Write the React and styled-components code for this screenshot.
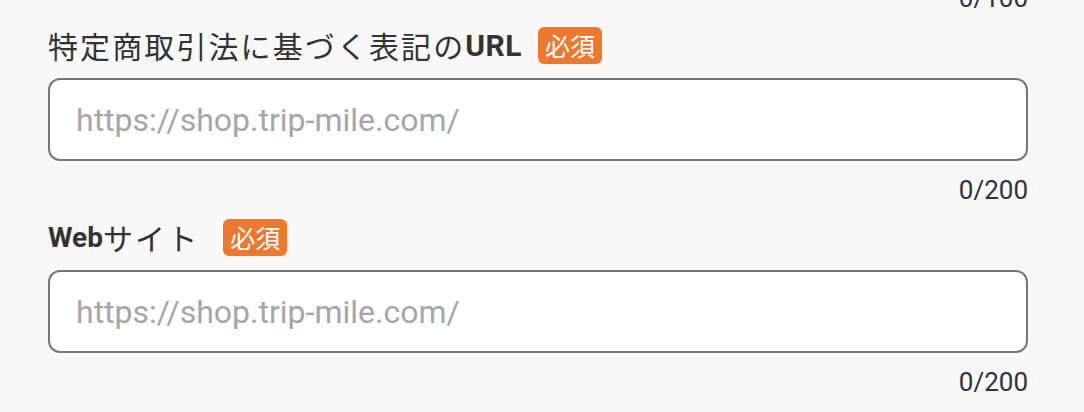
import React from "react";
import styled, { createGlobalStyle } from "styled-components";

const GlobalStyle = createGlobalStyle`
  html, body {
    margin: 0;
    padding: 0;
    background: #f8f8f8;
  }
  body {
    font-family: Roboto, "Noto Sans CJK JP", sans-serif;
    color: #333333;
  }
`;

const Form = styled.div`
  display: flex;
  flex-direction: column;
  width: 980px;
  padding-left: 48px;
  margin-top: -15px;
`;

const Counter = styled.div`
  font-family: Roboto, sans-serif;
  font-size: 26px;
  line-height: 26px;
  color: #333333;
  text-align: right;
  margin-top: ${(p) => (p.$lead ? "0" : "16px")};
`;

const Field = styled.div`
  display: flex;
  flex-direction: column;
  margin-top: 16px;
`;

const LabelRow = styled.div`
  display: flex;
  align-items: center;
  height: 37px;
  margin-bottom: 14px;
`;

const Label = styled.label`
  display: inline-flex;
  align-items: center;
  height: 37px;
  color: #333333;
  margin-right: ${(p) => p.$gap}px;
  white-space: nowrap;
`;

const Jp = styled.span`
  font-family: "Noto Sans CJK JP", sans-serif;
  font-weight: 400;
  font-size: 30px;
  line-height: 37px;
  letter-spacing: 2.1px;
`;

const Strong = styled.span`
  font-family: Roboto, sans-serif;
  font-weight: 700;
  font-size: ${(p) => p.$size}px;
  line-height: 37px;
  letter-spacing: ${(p) => p.$ls || 0}px;
`;

const Badge = styled.span`
  display: inline-flex;
  align-items: center;
  justify-content: center;
  height: 37px;
  padding: 0 7px;
  border-radius: 6px;
  background: #ed7931;
  color: #ffffff;
  font-family: "Noto Sans CJK JP", sans-serif;
  font-size: 25px;
  line-height: 1;
`;

const Input = styled.input`
  box-sizing: border-box;
  width: 100%;
  height: 83px;
  padding: 0 26px;
  border: 2px solid #777777;
  border-radius: 12px;
  background: #ffffff;
  font-family: Roboto, sans-serif;
  font-size: 32px;
  color: #333333;
  outline: none;

  &::placeholder {
    color: #a6a6a6;
  }
`;

function UrlField({ children, max, gap }) {
  return (
    <Field>
      <LabelRow>
        <Label $gap={gap}>{children}</Label>
        <Badge>必須</Badge>
      </LabelRow>
      <Input type="url" placeholder="https://shop.trip-mile.com/" />
      <Counter>0/{max}</Counter>
    </Field>
  );
}

export default function App() {
  return (
    <>
      <GlobalStyle />
      <Form>
        <Counter $lead>0/100</Counter>
        <UrlField max={200} gap={16}>
          <Jp>特定商取引法に基づく表記の</Jp>
          <Strong $size={30} $ls={0.5}>URL</Strong>
        </UrlField>
        <UrlField max={200} gap={24}>
          <Strong $size={28}>Web</Strong>
          <Jp>サイト</Jp>
        </UrlField>
      </Form>
    </>
  );
}
